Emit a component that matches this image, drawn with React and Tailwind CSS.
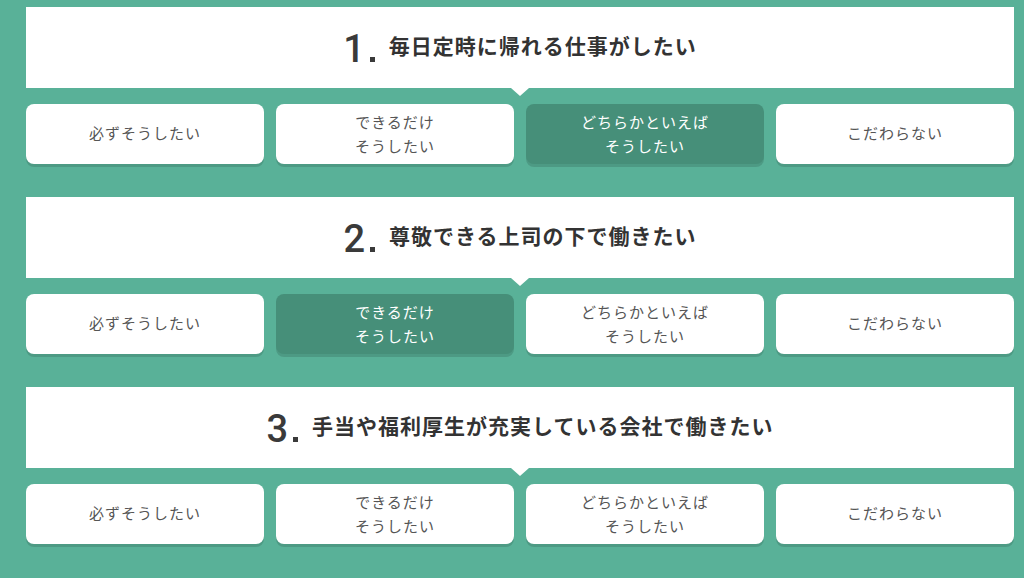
const questions = [
  { no: 1, text: '毎日定時に帰れる仕事がしたい', selected: 2 },
  { no: 2, text: '尊敬できる上司の下で働きたい', selected: 1 },
  { no: 3, text: '手当や福利厚生が充実している会社で働きたい', selected: -1 },
]

const options = [
  ['必ずそうしたい'],
  ['できるだけ', 'そうしたい'],
  ['どちらかといえば', 'そうしたい'],
  ['こだわらない'],
]

const jp = { fontFamily: '"Noto Sans CJK JP", "Noto Sans", sans-serif' }

export default function App() {
  return (
    <div className="min-h-[578px] bg-[#59b198] pt-[7px]" style={jp}>
      <div className="ml-[26px] w-[988px] flex flex-col gap-[33px]">
        {questions.map(q => (
          <div key={q.no}>
            {/* Question card */}
            <div className="relative bg-white h-[81px] flex items-center justify-center gap-[14px]">
              <span className="block text-[38px] font-medium text-[#3a3a3a] leading-none mt-[2px]" style={{ fontFamily: 'Roboto, "Liberation Sans", sans-serif' }}>
                {q.no}<span className="inline-block w-[5px] h-[5px] bg-[#3a3a3a] ml-[5px]" />
              </span>
              <h2 className="text-[21px] font-bold text-[#333] tracking-[1px] mb-[4px]">{q.text}</h2>
              <span className="absolute left-[485px] -bottom-[8px] w-0 h-0 border-l-[9px] border-r-[9px] border-t-[8px] border-l-transparent border-r-transparent border-t-white" />
            </div>

            {/* Answer buttons */}
            <div className="grid grid-cols-4 gap-[12px] mt-[16px]">
              {options.map((o, i) => {
                const on = q.selected === i
                return (
                  <button key={i}
                    className={`h-[60px] rounded-[8px] flex flex-col items-center justify-center text-[15px] leading-[24px] tracking-[1px] shadow-[0_3px_0_rgba(0,0,0,0.13)] ${o.length === 1 ? 'pb-[3px]' : ''} ${on ? 'bg-[#468f79] text-white' : 'bg-white text-[#555]'}`}>
                    {o.map(l => <span key={l}>{l}</span>)}
                  </button>
                )
              })}
            </div>
          </div>
        ))}
      </div>
    </div>
  )
}
